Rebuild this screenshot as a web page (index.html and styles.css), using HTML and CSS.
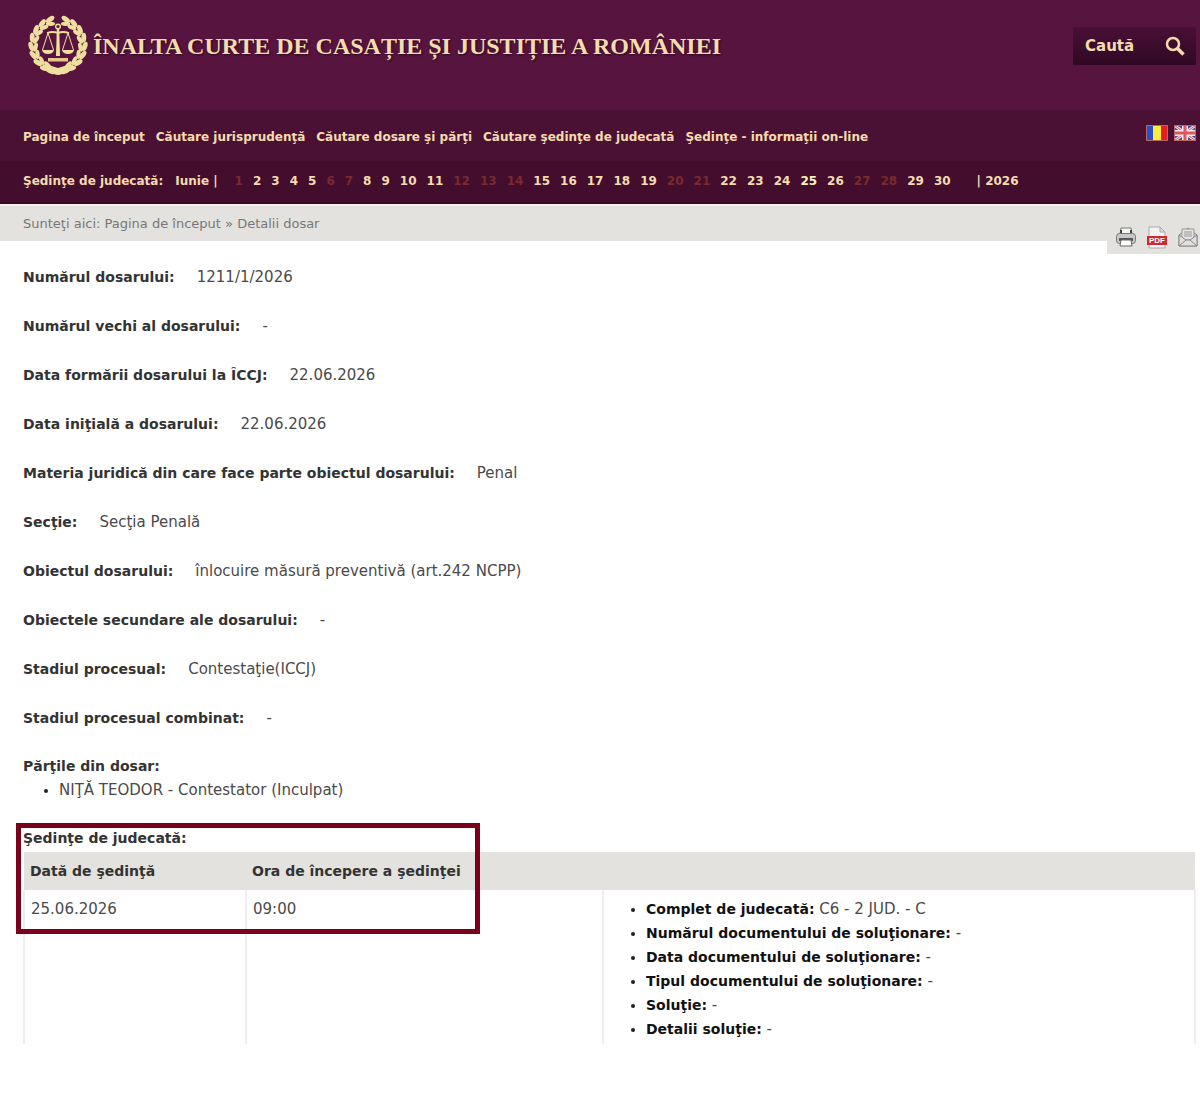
FILE: index.html
```html
<!DOCTYPE html>
<html lang="ro">
<head>
<meta charset="utf-8">
<meta name="viewport" content="width=device-width, initial-scale=1">
<title>Detalii dosar - Înalta Curte de Casație și Justiție a României</title>
<link rel="stylesheet" href="styles.css">
</head>
<body>
<header class="masthead">
  <a class="brand" href="#">
    <svg class="emblem" viewBox="0 0 60 60" aria-hidden="true">
      <defs>
        <g id="leaf">
          <ellipse cx="30" cy="3.200" rx="4.800" ry="2.500" transform="rotate(16 30 3.200)"/>
          <ellipse cx="31" cy="7.500" rx="4.600" ry="2.100" transform="rotate(-18 31 7.500)"/>
        </g>
        <g id="branch">
          <use href="#leaf" transform="rotate(17 30 30)"/>
          <use href="#leaf" transform="rotate(36 30 30)"/>
          <use href="#leaf" transform="rotate(55 30 30)"/>
          <use href="#leaf" transform="rotate(74 30 30)"/>
          <use href="#leaf" transform="rotate(93 30 30)"/>
          <use href="#leaf" transform="rotate(112 30 30)"/>
          <use href="#leaf" transform="rotate(131 30 30)"/>
          <use href="#leaf" transform="rotate(150 30 30)"/>
        </g>
      </defs>
      <g fill="#efdf9f">
        <use href="#branch"/>
        <use href="#branch" transform="matrix(-1 0 0 1 60 0)"/>
        <path d="M14 49q8 1 16 4q8-3 16-4l-4 7q-4 4-8 3q-4 2-8 0q-4 1-8-3z"/>
        <path d="M20 43h20v3.500H20z" fill="#e8c58c"/>
        <path d="M28.800 14h2.400l.8 27h-4z"/>
        <path d="M14 35h12q-1 4-6 4t-6-4zM34 35h12q-1 4-6 4t-6-4z"/>
      </g>
      <g fill="none" stroke="#efdf9f">
        <circle cx="30" cy="11.500" r="2.300" stroke-width="1.400"/>
        <path d="M19 18q6-2 11 0q5-2 11 0" stroke-width="1.800"/>
        <path d="M20 18l-5.500 17M20 18l5.500 17M40 18l-5.500 17M40 18l5.500 17"/>
      </g>
    </svg>
    <span class="brand-name">ÎNALTA CURTE DE CASAȚIE ȘI JUSTIȚIE A ROMÂNIEI</span>
  </a>
  <form class="search" action="#">
    <input class="search-field" type="text" aria-label="Caută" value="Caută">
    <button class="search-button" type="submit" aria-label="Caută">
      <svg viewBox="0 0 20 20" width="20" height="20" fill="none" stroke="#f3dcae" aria-hidden="true"><circle cx="8" cy="8" r="6" stroke-width="2.500"/><path d="M12.500 12.500l6 6" stroke-width="3.500"/></svg>
    </button>
  </form>
</header>

<nav class="menu" aria-label="Meniu principal">
  <div class="menu-links">
    <a href="#">Pagina de început</a>
    <a href="#">Căutare jurisprudenţă</a>
    <a href="#">Căutare dosare şi părţi</a>
    <a href="#">Căutare şedinţe de judecată</a>
    <a href="#">Şedinţe - informaţii on-line</a>
  </div>
  <div class="languages">
    <a href="#" aria-label="Română"><svg viewBox="0 0 22 16" width="22" height="16"><path fill="#2850c8" d="M0 0h8v16H0z"/><path fill="#ffeb3a" d="M7 0h8v16H7z"/><path fill="#e01f22" d="M15 0h7v16h-7z"/><path fill="none" stroke="#b9675f" d="M.5.5h21v15H.5z"/></svg></a>
    <a href="#" aria-label="English"><svg viewBox="0 0 22 16" width="22" height="16"><path fill="#414f9b" d="M0 0h22v16H0z"/><path stroke="#f3dfe5" stroke-width="3" d="M0 0l22 16M22 0L0 16"/><path stroke="#d0606c" d="M0 0l22 16M22 0L0 16"/><path stroke="#f6e7ea" stroke-width="6" d="M11 0v16M0 8h22"/><path stroke="#df5560" stroke-width="3" d="M11 0v16M0 8h22"/><path fill="none" stroke="#b9675f" d="M.5.5h21v15H.5z"/></svg></a>
  </div>
</nav>

<nav class="calendar" aria-label="Şedinţe de judecată">
  <span>Şedinţe de judecată:</span>
  <span class="month">Iunie |</span>
  <div class="days">
    <span class="off">1</span><a href="#">2</a><a href="#">3</a><a href="#">4</a><a href="#">5</a><span class="off">6</span><span class="off">7</span><a href="#">8</a><a href="#">9</a><a href="#">10</a><a href="#">11</a><span class="off">12</span><span class="off">13</span><span class="off">14</span><a href="#">15</a><a href="#">16</a><a href="#">17</a><a href="#">18</a><a href="#">19</a><span class="off">20</span><span class="off">21</span><a href="#">22</a><a href="#">23</a><a href="#">24</a><a class="today" href="#">25</a><a href="#">26</a><span class="off">27</span><span class="off">28</span><a href="#">29</a><a href="#">30</a>
  </div>
  <span class="year">| 2026</span>
</nav>

<div class="crumbs">
  <div class="trail">Sunteţi aici: <a href="#">Pagina de început</a> » Detalii dosar</div>
  <div class="tools">
    <a href="#" aria-label="Tipărire"><svg viewBox="0 0 22 22" width="22" height="22"><path fill="#f7f7f7" stroke="#777" d="M6 2h10l1 6H5z"/><path fill="#444" d="M5 4h2v4H5zM15 4h2v4h-2z"/><rect x="1.500" y="7.500" width="19" height="10" rx="3" fill="#c8c8c8" stroke="#777"/><path fill="#555" d="M4 12h14v3H4z"/><path fill="#fff" stroke="#666" d="M6 14h10l1 6H5z"/></svg></a>
    <a href="#" aria-label="PDF"><svg viewBox="0 0 22 24" width="22" height="24"><path fill="#f3f3f3" stroke="#aaa" d="M3 2h11l5 5v16H3z"/><path fill="#ddd" stroke="#aaa" d="M14 2v5h5z"/><path fill="#cf2a30" d="M1 11h20v9H1z"/><text class="pdf-text" x="11" y="18" text-anchor="middle">PDF</text></svg></a>
    <a href="#" aria-label="Trimite prin e-mail"><svg viewBox="0 0 22 22" width="22" height="22"><path fill="#ccc" stroke="#888" d="M2 9l9-7 9 7v11H2z"/><path fill="#e4e4e4" stroke="#999" d="M5 3h12v11H5z"/><path stroke="#999" d="M7 6h8M7 8h8M7 10h8"/><path fill="#e0e0e0" stroke="#888" d="M2 9l7 5h4l7-5v11H2zM2 20l7-6M20 20l-7-6"/></svg></a>
  </div>
</div>

<main class="content">
  <dl class="details">
    <div class="detail"><dt>Numărul dosarului:</dt><dd>1211/1/2026</dd></div>
    <div class="detail"><dt>Numărul vechi al dosarului:</dt><dd>-</dd></div>
    <div class="detail"><dt>Data formării dosarului la ÎCCJ:</dt><dd>22.06.2026</dd></div>
    <div class="detail"><dt>Data iniţială a dosarului:</dt><dd>22.06.2026</dd></div>
    <div class="detail"><dt>Materia juridică din care face parte obiectul dosarului:</dt><dd>Penal</dd></div>
    <div class="detail"><dt>Secţie:</dt><dd>Secţia Penală</dd></div>
    <div class="detail"><dt>Obiectul dosarului:</dt><dd>înlocuire măsură preventivă (art.242 NCPP)</dd></div>
    <div class="detail"><dt>Obiectele secundare ale dosarului:</dt><dd>-</dd></div>
    <div class="detail"><dt>Stadiul procesual:</dt><dd>Contestaţie(ICCJ)</dd></div>
    <div class="detail"><dt>Stadiul procesual combinat:</dt><dd>-</dd></div>
  </dl>
  <section class="parties">
    <h2>Părţile din dosar:</h2>
    <ul>
      <li>NIŢĂ TEODOR - Contestator (Inculpat)</li>
    </ul>
  </section>
  <section class="hearings">
    <h2>Şedinţe de judecată:</h2>
    <table class="hearing-table">
      <thead>
        <tr><th class="col-date" scope="col">Dată de şedinţă</th><th class="col-hour" scope="col">Ora de începere a şedinţei</th><th></th></tr>
      </thead>
      <tbody>
        <tr>
          <td>25.06.2026</td>
          <td>09:00</td>
          <td>
            <ul>
              <li><b>Complet de judecată:</b> C6 - 2 JUD. - C</li>
              <li><b>Numărul documentului de soluţionare:</b> -</li>
              <li><b>Data documentului de soluţionare:</b> -</li>
              <li><b>Tipul documentului de soluţionare:</b> -</li>
              <li><b>Soluţie:</b> -</li>
              <li><b>Detalii soluţie:</b> -</li>
            </ul>
          </td>
        </tr>
      </tbody>
    </table>
    <div class="highlight"></div>
  </section>
</main>
</body>
</html>
```
FILE: styles.css
```css
* { box-sizing: border-box; }

body {
  margin: 0;
  background: #fff;
  color: #4a4a4a;
  font: 15px/24px "DejaVu Sans", Verdana, sans-serif;
}

a { color: inherit; text-decoration: none; }
svg { display: block; }
h2, dl, dd, ul { margin: 0; padding: 0; }
h2, dt { color: #333; font-size: 14px; line-height: 24px; font-weight: bold; }

.masthead {
  display: flex;
  justify-content: space-between;
  align-items: flex-start;
  height: 110px;
  padding: 15px 4px 0 28px;
  background: #57143e;
}
.brand { display: flex; align-items: center; gap: 5px; }
.emblem { width: 60px; height: 60px; }
.brand-name {
  padding-top: 2px;
  color: #f3dcae;
  font: bold 24px/32px "Liberation Serif", serif;
  text-shadow: 1px 1px 2px #2c0820;
}
.search {
  display: flex;
  align-items: center;
  width: 123px;
  height: 38px;
  margin-top: 12px;
  padding: 0 11px 0 12px;
  background: linear-gradient(#4a1036, #2f0823);
}
.search-field {
  flex: 1;
  min-width: 0;
  padding: 0;
  border: 0;
  background: none;
  color: #f3dcae;
  font: bold 15px/24px "DejaVu Sans", Verdana, sans-serif;
}
.search-button { padding: 0; border: 0; background: none; }

.menu {
  display: flex;
  justify-content: space-between;
  min-height: 51px;
  padding: 15px 4px 12px 23px;
  background: #4b1135;
  color: #f3dcae;
  font-size: 12px;
  font-weight: bold;
}
.menu-links { display: flex; flex-wrap: wrap; gap: 11px; }
.languages { display: flex; gap: 6px; }

.calendar {
  display: flex;
  flex-wrap: wrap;
  min-height: 43px;
  padding: 8px 4px 9px 23px;
  border-bottom: 2px solid #3a0526;
  background: #430e2e;
  color: #f3dcae;
  font-size: 12px;
  font-weight: bold;
}
.month { margin: 0 17px 0 12px; }
.days { display: flex; flex-wrap: wrap; gap: 10px; }
.off { color: #7a2a2c; }
.today { color: #fff3b8; }
.year { margin-left: 26px; }

.crumbs {
  display: flex;
  justify-content: space-between;
  height: 37px;
  padding-left: 23px;
  border-top: 2px solid #f0efed;
  background: #e3e2de;
  color: #777;
  font-size: 13px;
}
.trail { padding-top: 6px; }
.tools {
  display: flex;
  align-items: center;
  gap: 9px;
  height: 48px;
  padding: 14px 1px 0 8px;
  background: #e3e2de;
}
.pdf-text { fill: #fff; font: bold 8px "Liberation Sans", sans-serif; }

.content { padding: 24px 4px 0 23px; }
.details { display: grid; gap: 25px; margin-bottom: 24px; }
.detail { display: flex; gap: 22px; }

.parties { margin-bottom: 24px; }
.parties ul { padding-left: 36px; }

.hearings { position: relative; }
.hearing-table {
  width: 100%;
  margin-top: 2px;
  border-collapse: collapse;
  table-layout: fixed;
}
.col-date { width: 222px; }
.col-hour { width: 357px; }
.hearing-table th {
  height: 38px;
  padding: 0 6px;
  background: #e3e2de;
  color: #333;
  font-size: 14px;
  text-align: left;
}
.hearing-table td {
  padding: 7px 6px 3px;
  border: 2px solid #eee;
  border-width: 0 2px;
  vertical-align: top;
}
.hearing-table ul { padding-left: 36px; }
.hearing-table b { color: #111; font-size: 14px; }
li::marker { color: #222; font-size: 14px; }

.highlight {
  position: absolute;
  top: -3px;
  left: -7px;
  width: 464px;
  height: 111px;
  border: 5px solid #7b0019;
}
```
